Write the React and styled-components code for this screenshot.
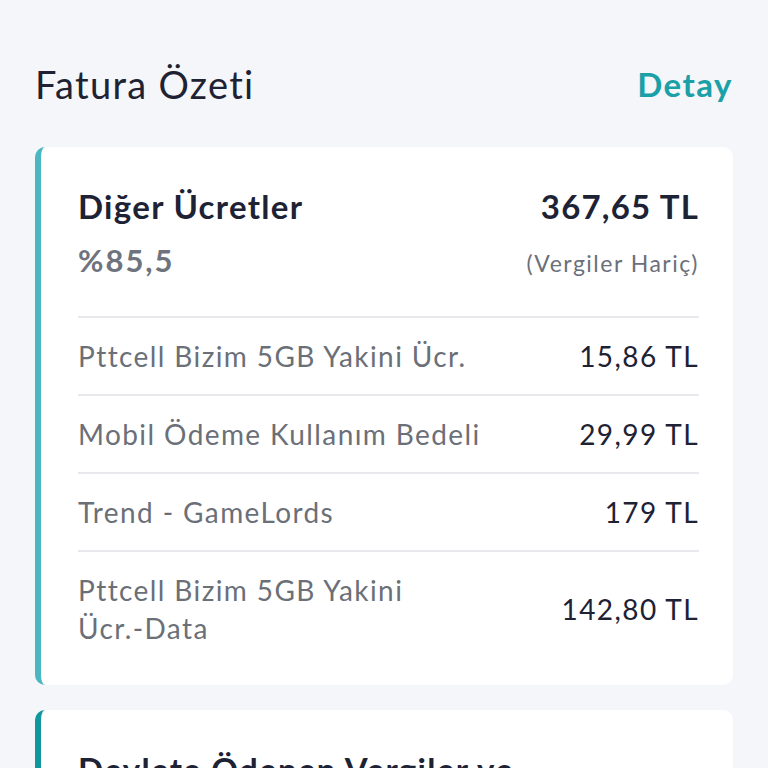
import React from "react";
import styled, { createGlobalStyle } from "styled-components";

const GlobalStyle = createGlobalStyle`
  html, body {
    margin: 0;
    padding: 0;
    background: #f4f6f9;
    font-family: "Lato", "Noto Sans", sans-serif;
  }
`;

const Page = styled.main`
  padding: 60px 35px 0 35px;
  height: 768px;
  box-sizing: border-box;
  overflow: hidden;
`;

const Header = styled.div`
  display: flex;
  justify-content: space-between;
  align-items: center;
  margin-bottom: 39px;
`;

const Title = styled.h1`
  margin: 0;
  font-size: 38px;
  font-weight: 400;
  letter-spacing: 1.3px;
  color: #1f2233;
  line-height: 48px;
`;

const Link = styled.a`
  font-size: 33px;
  font-weight: 700;
  letter-spacing: 1.5px;
  color: #1aa0a6;
  text-decoration: none;
  line-height: 48px;
`;

const Card = styled.section`
  background: #fff;
  border-radius: 10px;
  border-left: 6px solid ${(p) => p.$accent};
  padding: 37px 34px 19px 37px;
  margin-bottom: 25px;
`;

const CardHead = styled.div`
  display: grid;
  grid-template-columns: 1fr auto;
  align-items: baseline;
  row-gap: 12px;
  padding-bottom: 36px;
  border-bottom: 2px solid #e8e9ec;
`;

const HeadTitle = styled.h2`
  margin: 0;
  font-size: 33px;
  font-weight: 700;
  letter-spacing: 1.3px;
  color: #1e2235;
  line-height: 44px;
`;

const HeadAmount = styled.span`
  font-size: 33px;
  font-weight: 700;
  letter-spacing: 1.2px;
  color: #1e2235;
  text-align: right;
`;

const Percent = styled.span`
  font-size: 31px;
  font-weight: 700;
  letter-spacing: 2px;
  color: #6e737d;
  line-height: 40px;
`;

const Note = styled.span`
  font-size: 23px;
  letter-spacing: 1.5px;
  color: #6b7079;
  text-align: right;
`;

const Row = styled.div`
  display: flex;
  justify-content: space-between;
  align-items: center;
  gap: 20px;
  padding: 19px 0;
  border-bottom: ${(p) => (p.$last ? "none" : "2px solid #e8e9ec")};
`;

const Label = styled.span`
  font-size: 28px;
  line-height: 38px;
  letter-spacing: 1.4px;
  color: #6b6f78;
  max-width: 420px;
`;

const Keep = styled.span`
  white-space: nowrap;
`;

const Value = styled.span`
  font-size: 28px;
  line-height: 38px;
  letter-spacing: 1.4px;
  color: #1e2235;
  white-space: nowrap;
`;

const rows = [
  { label: "Pttcell Bizim 5GB Yakini Ücr.", value: "15,86 TL" },
  { label: "Mobil Ödeme Kullanım Bedeli", value: "29,99 TL" },
  { label: "Trend - GameLords", value: "179 TL" },
  {
    label: (
      <>
        Pttcell Bizim 5GB Yakini <Keep>Ücr.-Data</Keep>
      </>
    ),
    value: "142,80 TL",
  },
];

export default function App() {
  return (
    <Page>
      <GlobalStyle />
      <Header>
        <Title>Fatura Özeti</Title>
        <Link href="#">Detay</Link>
      </Header>
      <Card $accent="#4db7c1">
        <CardHead>
          <HeadTitle>Diğer Ücretler</HeadTitle>
          <HeadAmount>367,65 TL</HeadAmount>
          <Percent>%85,5</Percent>
          <Note>(Vergiler Hariç)</Note>
        </CardHead>
        {rows.map((r, i) => (
          <Row key={i} $last={i === rows.length - 1}>
            <Label>{r.label}</Label>
            <Value>{r.value}</Value>
          </Row>
        ))}
      </Card>
      <Card $accent="#0f979d">
        <CardHead>
          <HeadTitle>Devlete Ödenen Vergiler ve</HeadTitle>
        </CardHead>
      </Card>
    </Page>
  );
}
